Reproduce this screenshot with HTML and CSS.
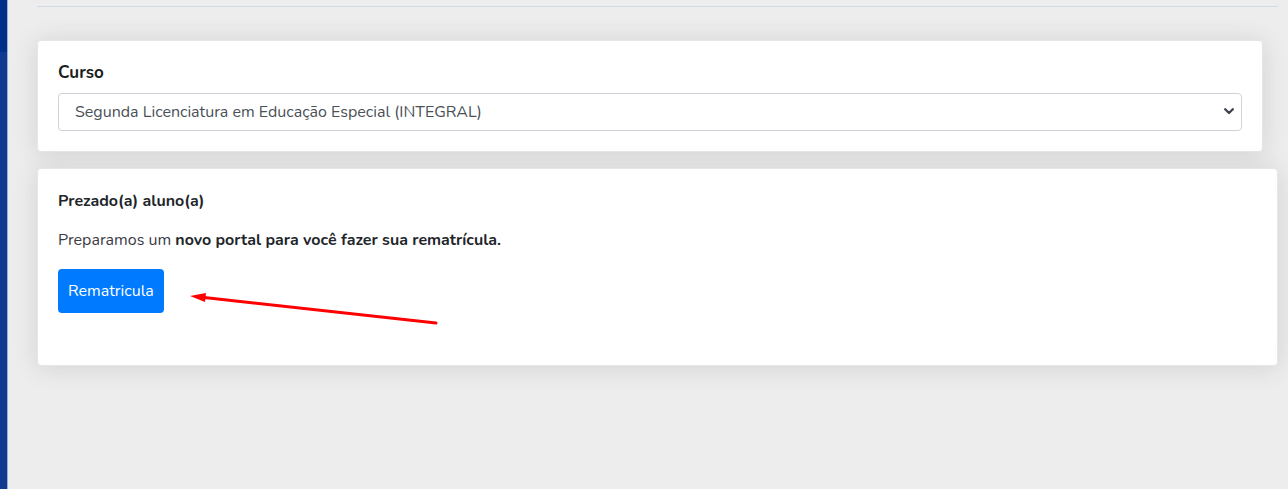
FILE: index.html
```html
<!DOCTYPE html>
<html lang="pt-BR">
<head>
<meta charset="utf-8">
<title>Rematrícula</title>
<link rel="stylesheet" href="styles.css">
</head>
<body>
<div class="layout">
  <aside class="sidebar"><div class="sidebar-top"></div></aside>
  <main class="content">
    <hr class="topline">
    <section class="card card-course">
      <label class="label" for="curso">Curso</label>
      <div class="select-wrap">
        <select id="curso" class="select">
          <option>Segunda Licenciatura em Educação Especial (INTEGRAL)</option>
        </select>
        <svg class="chevron" width="10" height="7" viewBox="0 0 10 7"><path d="M1.2 1.3 L5 5 L8.8 1.3" fill="none" stroke="#3d434a" stroke-width="2.3" stroke-linecap="round" stroke-linejoin="round"/></svg>
      </div>
    </section>
    <section class="card card-notice">
      <h2 class="notice-title">Prezado(a) aluno(a)</h2>
      <p class="notice-text">Preparamos um <strong>novo portal para você fazer sua rematrícula.</strong></p>
      <div class="btn-row">
        <a class="btn" href="#">Rematricula</a>
      </div>
      <svg class="arrow" width="260" height="40" viewBox="0 0 260 40">
        <line x1="14" y1="8.3" x2="248" y2="34" stroke="#ff0000" stroke-width="3" stroke-linecap="round"/>
        <polygon points="2,7 18,4 17,13" fill="#ff0000"/>
      </svg>
    </section>
  </main>
</div>
</body>
</html>
```

FILE: styles.css
```css
* { box-sizing: border-box; }
html, body { margin: 0; padding: 0; }
body {
  background: #ededed;
  font-family: "Nunito", "Lato", "Noto Sans", sans-serif;
  color: #212529;
  height: 489px;
  overflow: hidden;
}
.layout { display: flex; height: 489px; }
.sidebar {
  width: 8px;
  flex: 0 0 8px;
  background: #103a90;
  border-right: 1px solid #9fb0d4;
}
.sidebar-top { height: 52px; background: #002f87; }
.content {
  flex: 1;
  padding: 0 10px 0 29px;
  display: flex;
  flex-direction: column;
}
.topline {
  margin: 6px 0 0 0;
  border: 0;
  border-top: 1px solid #d2dae3;
  height: 0;
}
.card {
  background: #fff;
  border: 1px solid #e6e6e6;
  border-radius: 4px;
  box-shadow: 0 2px 24px 0 rgba(58, 59, 69, 0.15);
  padding: 19px 20px;
  position: relative;
}
.card-course { margin: 33px 15px 0 0; padding-top: 20px; padding-bottom: 20px; }
.label {
  display: block;
  font-weight: 700;
  font-size: 17px;
  line-height: 24px;
  margin-bottom: 8px;
  color: #1b1e21;
}
.select-wrap { position: relative; }
.select {
  display: block;
  width: 100%;
  height: 38px;
  padding: 0 12px 0 16px;
  border: 1px solid #ced4da;
  border-radius: 4px;
  background: #fff;
  font-family: inherit;
  font-size: 16px;
  color: #495057;
  appearance: none;
  -webkit-appearance: none;
}
.chevron { position: absolute; right: 8px; top: 15px; }
.card-notice { margin-top: 16px; padding-top: 22px; padding-bottom: 52px; }
.notice-title {
  margin: 0;
  font-size: 16px;
  font-weight: 700;
  line-height: 20px;
  color: #212529;
}
.notice-text {
  margin: 17px 0 0 0;
  font-size: 16px;
  line-height: 24px;
  color: #3a3b45;
}
.notice-text strong { color: #212529; }
.btn-row { display: flex; margin-top: 17px; }
.btn {
  display: inline-block;
  background: #007bff;
  color: #fff;
  text-decoration: none;
  font-size: 16px;
  line-height: 24px;
  padding: 10px 10px;
  border-radius: 4px;
}
.arrow { position: absolute; left: 150px; top: 120px; }
```
